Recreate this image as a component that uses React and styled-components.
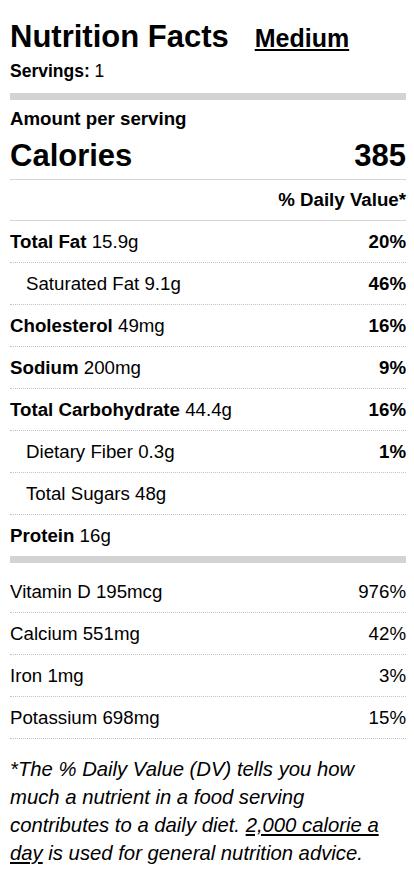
import React from "react";
import styled, { createGlobalStyle } from "styled-components";

const GlobalStyle = createGlobalStyle`
  html, body {
    margin: 0;
    padding: 0;
    background: #fff;
  }
  body {
    font-family: "Liberation Sans", Arial, Helvetica, sans-serif;
    color: #000;
  }
`;

const Label = styled.div`
  padding: 19px 8px 0 10px;
`;

const TitleRow = styled.div`
  display: flex;
  align-items: baseline;
  gap: 26px;
  line-height: 36px;
`;

const Title = styled.h1`
  margin: 0;
  font-size: 31px;
  font-weight: 700;
  line-height: 36px;
`;

const SizeLink = styled.a`
  font-size: 25px;
  font-weight: 700;
  color: #000;
  text-decoration: underline;
  text-underline-offset: 2px;
`;

const Servings = styled.div`
  margin-top: 5px;
  font-size: 17.5px;
  line-height: 20px;

  & > b {
    font-weight: 700;
  }
`;

const ThickBar = styled.div`
  height: 7px;
  background: #d3d3d3;
  margin-top: ${(p) => p.$top || 0}px;
`;

const Amount = styled.div`
  margin-top: 8px;
  font-size: 18.7px;
  font-weight: 700;
  line-height: 22px;
`;

const CaloriesRow = styled.div`
  display: flex;
  justify-content: space-between;
  margin-top: 9px;
  padding-bottom: 6px;
  font-size: 31px;
  font-weight: 700;
  line-height: 34px;
  border-bottom: 1px solid #d6d6d6;
`;

const DailyHead = styled.div`
  text-align: right;
  padding: 9px 0 9px;
  font-size: 18.7px;
  font-weight: 700;
  line-height: 22px;
  border-bottom: 1px solid #d6d6d6;
`;

const Row = styled.div`
  display: flex;
  justify-content: space-between;
  padding: 10px 0 10px ${(p) => (p.$sub ? 16 : 0)}px;
  font-size: 18.7px;
  line-height: 21px;
  border-bottom: ${(p) => (p.$last ? "none" : "1px dotted #c4c4c4")};

  & b {
    font-weight: 700;
  }
`;

const Percent = styled.span`
  font-weight: ${(p) => (p.$bold ? 700 : 400)};
`;

const Minerals = styled.div`
  padding-top: 8px;
`;

const Footnote = styled.p`
  margin: 0;
  padding: 16px 0 20px 0;
  font-size: 20.3px;
  font-style: italic;
  line-height: 28px;

  & > u {
    text-underline-offset: 2px;
  }
`;

const nutrients = [
  { name: "Total Fat", amount: "15.9g", dv: "20%" },
  { name: "Saturated Fat", amount: "9.1g", dv: "46%", sub: true },
  { name: "Cholesterol", amount: "49mg", dv: "16%" },
  { name: "Sodium", amount: "200mg", dv: "9%" },
  { name: "Total Carbohydrate", amount: "44.4g", dv: "16%" },
  { name: "Dietary Fiber", amount: "0.3g", dv: "1%", sub: true },
  { name: "Total Sugars", amount: "48g", dv: "", sub: true },
  { name: "Protein", amount: "16g", dv: "" },
];

const minerals = [
  { name: "Vitamin D", amount: "195mcg", dv: "976%" },
  { name: "Calcium", amount: "551mg", dv: "42%" },
  { name: "Iron", amount: "1mg", dv: "3%" },
  { name: "Potassium", amount: "698mg", dv: "15%" },
];

export default function App() {
  return (
    <>
      <GlobalStyle />
      <Label>
        <TitleRow>
          <Title>Nutrition Facts</Title>
          <SizeLink>Medium</SizeLink>
        </TitleRow>
        <Servings>
          <b>Servings:</b> 1
        </Servings>
        <ThickBar $top={12} />
        <Amount>Amount per serving</Amount>
        <CaloriesRow>
          <span>Calories</span>
          <span>385</span>
        </CaloriesRow>
        <DailyHead>% Daily Value*</DailyHead>

        {nutrients.map((n, i) => (
          <Row key={n.name} $sub={n.sub} $last={i === nutrients.length - 1}>
            <span>
              {n.sub ? n.name : <b>{n.name}</b>} {n.amount}
            </span>
            <Percent $bold>{n.dv}</Percent>
          </Row>
        ))}

        <ThickBar />

        <Minerals>
          {minerals.map((m) => (
            <Row key={m.name}>
              <span>
                {m.name} {m.amount}
              </span>
              <Percent>{m.dv}</Percent>
            </Row>
          ))}
        </Minerals>

        <Footnote>
          *The % Daily Value (DV) tells you how much a nutrient in a food
          serving contributes to a daily diet. <u>2,000 calorie a day</u> is
          used for general nutrition advice.
        </Footnote>
      </Label>
    </>
  );
}
